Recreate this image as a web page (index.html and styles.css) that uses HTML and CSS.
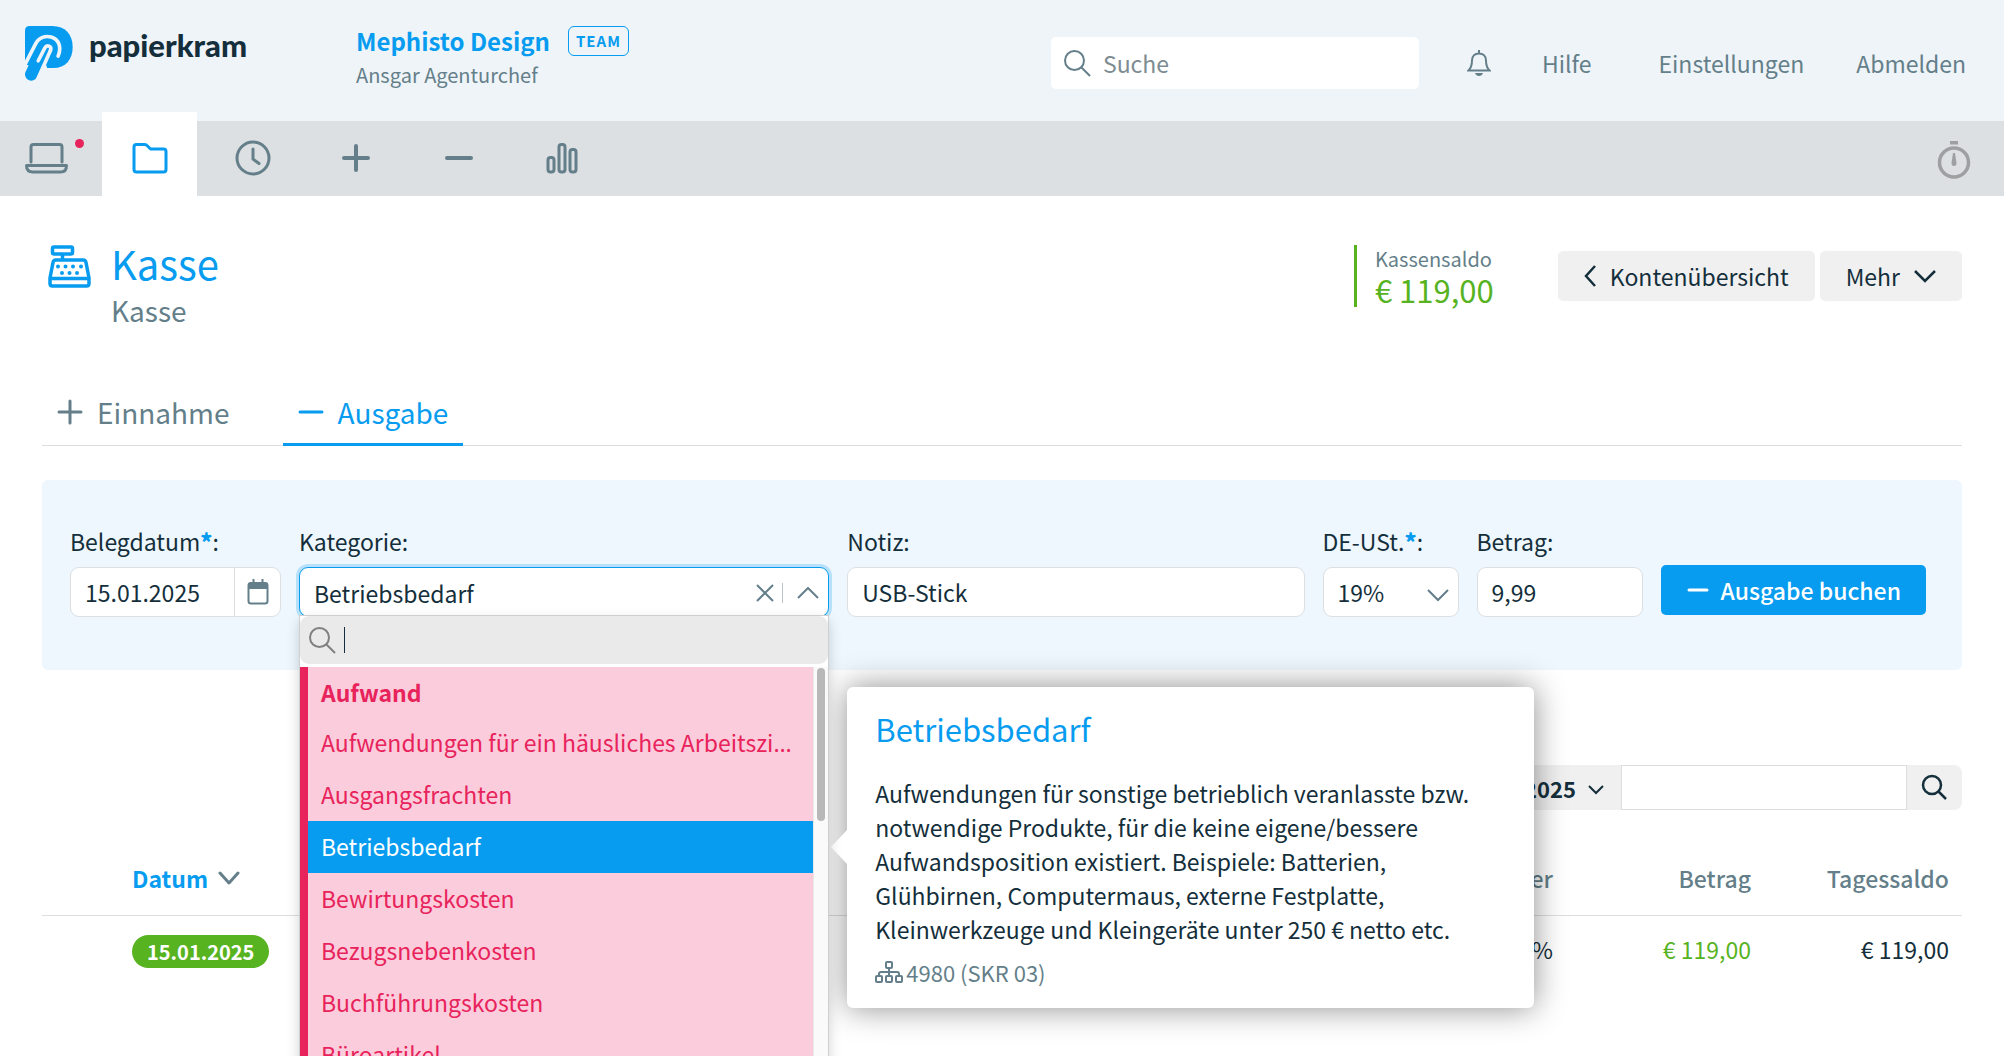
FILE: index.html
```html
<!DOCTYPE html>
<html lang="de">
<head>
<meta charset="utf-8">
<title>Kasse – papierkram</title>
<link rel="stylesheet" href="styles.css">
</head>
<body>
<header class="topbar">
  <a class="brand" href="#">
    <svg class="brand-mark" viewBox="27 30 145 166" aria-hidden="true">
      <path d="M27 44Q27 30 41 30H110C148 30 171 56 171 93S150 157 112 157H80L27 146Z" fill="#079cf0"/>
      <path d="M46 176L78 108" stroke="#079cf0" stroke-width="38" stroke-linecap="round"/>
      <path d="M20 160L59 84C68 66 86 58 106 63C130 70 138 94 127 121" fill="none" stroke="#eff4f8" stroke-width="11" stroke-linecap="round"/>
      <path d="M67 135L87 96C93 85 109 90 104 104" fill="none" stroke="#eff4f8" stroke-width="11" stroke-linecap="round"/>
      <path d="M104 103L66 190" fill="none" stroke="#eff4f8" stroke-width="11"/>
      <path d="M94 157L74 203H60L88 140Z" fill="#eff4f8"/>
    </svg>
    <span class="brand-name">papierkram</span>
  </a>
  <div class="account">
    <div class="account-line"><a class="company" href="#">Mephisto Design</a><span class="plan">TEAM</span></div>
    <div class="user">Ansgar Agenturchef</div>
  </div>
  <div class="tools">
    <label class="search">
      <svg width="28" height="28" viewBox="0 0 28 28" class="line"><circle cx="11.500" cy="11.500" r="9.500"/><path d="M18.500 18.500L27 27"/></svg>
      <input type="text" placeholder="Suche" aria-label="Suche">
    </label>
    <button class="bell" type="button" aria-label="Benachrichtigungen">
      <svg width="24" height="26" viewBox="0 0 24 26" class="line"><path d="M12 0V3M1.500 20.500C4 18 5 15 5 10.500C5 6 8 3.500 12 3.500S19 6 19 10.500C19 15 20 18 22.500 20.500Z"/><path d="M8 23H16Q15 26 12 26T8 23Z" fill="currentColor" stroke="none"/></svg>
    </button>
    <a href="#" class="link-help">Hilfe</a>
    <a href="#" class="link-settings">Einstellungen</a>
    <a href="#" class="link-logout">Abmelden</a>
  </div>
</header>

<nav class="mainnav" aria-label="Hauptnavigation">
  <a href="#" class="first" aria-label="Übersicht"><svg width="44" height="32" viewBox="0 0 44 32" class="thick"><path d="M6 20V5Q6 2.500 8.500 2.500H34.500Q37 2.500 37 5V20"/><path d="M1.500 23.500H41.500Q41.500 30 35.500 30H8Q1.500 30 1.500 23.500Z"/></svg><span class="dot"></span></a>
  <a href="#" class="active" aria-label="Geschäft"><svg width="36" height="32" viewBox="0 0 36 32" class="thick"><path d="M2 5Q2 2.500 4.500 2.500H12.500Q14.500 2.500 15.500 4L18.500 7H31.500Q34 7 34 9.500V27.500Q34 30 31.500 30H4.500Q2 30 2 27.500Z"/></svg></a>
  <a href="#" aria-label="Zeit"><svg width="36" height="36" viewBox="0 0 36 36" class="thick"><circle cx="18" cy="18" r="16"/><path d="M18 9V19L24 23.500"/></svg></a>
  <a href="#" aria-label="Einnahmen"><svg width="28" height="28" viewBox="0 0 28 28" class="heavy"><path d="M14 2V26M2 14H26"/></svg></a>
  <a href="#" aria-label="Ausgaben"><svg width="28" height="28" viewBox="0 0 28 28" class="heavy"><path d="M2 14H26"/></svg></a>
  <a href="#" aria-label="Auswertungen"><svg width="32" height="32" viewBox="0 0 32 32" class="thick"><rect x="2" y="15.500" width="6" height="14.500" rx="2.500"/><rect x="13" y="2.500" width="6" height="27.500" rx="2.500"/><rect x="24" y="7.500" width="6" height="22.500" rx="2.500"/></svg></a>
  <button class="timer" type="button" aria-label="Stoppuhr"><svg width="34" height="40" viewBox="0 0 34 40"><circle cx="17" cy="22.500" r="14.500" fill="none" stroke="currentColor" stroke-width="3.500"/><path d="M13 1H21V4.500H13Z" fill="currentColor"/><path d="M16 13H18L19.500 23Q19.500 26 17 26T14.500 23Z" fill="currentColor"/></svg></button>
</nav>

<main class="content">
  <section class="pagehead">
    <svg class="register" width="44" height="44" viewBox="0 0 44 44" fill="none" stroke="#079cf0" stroke-width="3.500" stroke-linejoin="round"><rect x="4.500" y="2" width="20" height="7" rx="1.500"/><path d="M14.500 9V15M8 15H35Q37.500 15 38 17.500L41 33V38.500Q41 41 38.500 41H4.500Q2 41 2 38.500V33L5 17.500Q5.500 15 8 15ZM2 33.500H41"/><path d="M10 21.500H10M17.500 21.500H17.500M25 21.500H25M33 21.500H33M14 28H14M21.500 28H21.500M29 28H29" stroke-width="4" stroke-linecap="round"/></svg>
    <div class="titles"><h1>Kasse</h1><p>Kasse</p></div>
    <div class="headtools">
      <div class="balance"><span class="balance-label">Kassensaldo</span><span class="balance-value">€ 119,00</span></div>
      <button class="btn" type="button"><svg width="12" height="22" viewBox="0 0 12 22" class="chevron"><path d="M11 1L2 11L11 21"/></svg>Kontenübersicht</button>
      <button class="btn btn-more" type="button">Mehr<svg width="22" height="14" viewBox="0 0 22 14" class="chevron"><path d="M1 2L11 12L21 2"/></svg></button>
    </div>
  </section>

  <nav class="tabs" aria-label="Buchungsart">
    <a href="#"><svg width="26" height="26" viewBox="0 0 26 26" class="tabicon"><path d="M13 2V24M2 13H24"/></svg>Einnahme</a>
    <a href="#" class="active"><svg width="26" height="26" viewBox="0 0 26 26" class="tabicon"><path d="M2 13H24"/></svg>Ausgabe</a>
  </nav>

  <form class="booking">
    <div class="field">
      <label for="date">Belegdatum<b>*</b>:</label>
      <div class="datebox"><input id="date" type="text" value="15.01.2025"><button type="button" aria-label="Kalender"><svg width="22" height="26" viewBox="0 0 22 26"><path d="M3.500 4H18.500Q20.500 4 20.500 6.500V22Q20.500 24.500 18 24.500H4Q1.500 24.500 1.500 22V6.500Q1.500 4 3.500 4Z" fill="none" stroke="currentColor" stroke-width="2"/><path d="M1 4H21V10H1ZM5.500 0H7.500V4H5.500ZM14.500 0H16.500V4H14.500Z" fill="currentColor"/></svg></button></div>
    </div>
    <div class="field category">
      <label for="category">Kategorie:</label>
      <button id="category" class="combo" type="button" role="combobox" aria-expanded="true" aria-controls="category-list">
        <span class="combo-value">Betriebsbedarf</span>
        <svg width="18" height="18" viewBox="0 0 18 18" class="line"><path d="M1 1L17 17M17 1L1 17"/></svg>
        <span class="combo-rule"></span>
        <svg width="22" height="12" viewBox="0 0 22 12" class="line"><path d="M1 11L11 1L21 11"/></svg>
      </button>
      <div class="dropdown">
        <label class="dropdown-search"><svg width="28" height="28" viewBox="0 0 28 28" class="line"><circle cx="11.500" cy="11.500" r="9.500"/><path d="M18.500 18.500L27 27"/></svg><span class="caret"></span><input type="text" aria-label="Kategorie suchen"></label>
        <div class="dropdown-body">
          <ul id="category-list" role="listbox">
            <li class="group">Aufwand</li>
            <li role="option">Aufwendungen für ein häusliches Arbeitszi<span class="dots">…</span></li>
            <li role="option">Ausgangsfrachten</li>
            <li role="option" aria-selected="true" class="selected">Betriebsbedarf</li>
            <li role="option">Bewirtungskosten</li>
            <li role="option">Bezugsnebenkosten</li>
            <li role="option">Buchführungskosten</li>
            <li role="option">Büroartikel</li>
          </ul>
          <div class="track"><div class="thumb"></div></div>
        </div>
      </div>
    </div>
    <div class="field note">
      <label for="note">Notiz:</label>
      <input id="note" type="text" value="USB-Stick">
      <aside class="hint" role="tooltip">
        <h2>Betriebsbedarf</h2>
        <p>Aufwendungen für sonstige betrieblich veranlasste bzw. notwendige Produkte, für die keine eigene/bessere Aufwandsposition existiert. Beispiele: Batterien, Glühbirnen, Computermaus, externe Festplatte, Kleinwerkzeuge und Kleingeräte unter 250 € netto etc.</p>
        <div class="account-no"><svg width="28" height="22" viewBox="0 0 28 22" fill="none" stroke="currentColor" stroke-width="2"><rect x="11" y="1" width="6" height="6" rx="1"/><rect x="1" y="15" width="6" height="6" rx="1"/><rect x="11" y="15" width="6" height="6" rx="1"/><rect x="21" y="15" width="6" height="6" rx="1"/><path d="M14 7V15M4 15V13Q4 11 6 11H22Q24 11 24 13V15"/></svg>4980 (SKR 03)</div>
      </aside>
    </div>
    <div class="field">
      <label for="vat">DE-USt.<b>*</b>:</label>
      <div class="selectbox"><select id="vat"><option>19%</option></select><svg width="22" height="14" viewBox="0 0 22 14" class="line"><path d="M1 2L11 12L21 2"/></svg></div>
    </div>
    <div class="field">
      <label for="amount">Betrag:</label>
      <input id="amount" type="text" value="9,99">
    </div>
    <button class="submit" type="button"><svg width="22" height="22" viewBox="0 0 22 22" class="tabicon"><path d="M2 11H20"/></svg>Ausgabe buchen</button>
  </form>

  <div class="filter">
    <button class="year" type="button">2025<svg width="16" height="10" viewBox="0 0 16 10" class="line"><path d="M1 1L8 8L15 1"/></svg></button>
    <input type="text" aria-label="Buchungen durchsuchen">
    <button class="go" type="button" aria-label="Suchen"><svg width="26" height="26" viewBox="0 0 26 26" class="chevron"><circle cx="11" cy="11" r="9"/><path d="M17.500 17.500L25 25"/></svg></button>
  </div>

  <table class="entries">
    <thead><tr><th class="date"><a href="#">Datum<svg width="22" height="14" viewBox="0 0 22 14" class="thick"><path d="M2 2L11 12L20 2"/></svg></a></th><th>Steuer</th><th>Betrag</th><th>Tagessaldo</th></tr></thead>
    <tbody><tr><td class="date"><span class="pill">15.01.2025</span></td><td>19 %</td><td class="plus">€ 119,00</td><td>€ 119,00</td></tr></tbody>
  </table>
</main>
</body>
</html>
```
FILE: styles.css
```css
:root {
  --blue: #079cf0;
  --ink: #142f3b;
  --slate: #647f8a;
  --green: #57b31f;
  --pink: #e8235b;
  --rule: #dcdfe1;
  --soft: #f0f0f0;
}

* { box-sizing: border-box; }

body {
  margin: 0;
  height: 100vh;
  overflow: hidden;
  background: #fff;
  color: var(--ink);
  font: 23px/34px "Noto Sans CJK SC", "Noto Sans", sans-serif;
}

a { color: inherit; text-decoration: none; }
button, input, select { font: inherit; color: inherit; margin: 0; }
button { border: 0; background: none; padding: 0; cursor: pointer; }
svg { flex: none; display: block; }
h1, h2, p, ul { margin: 0; padding: 0; font-weight: 400; }

.line, .thick, .heavy, .tabicon, .chevron { fill: none; stroke: currentColor; stroke-width: 2; }
.thick { stroke-width: 3; stroke-linecap: round; stroke-linejoin: round; }
.heavy { stroke-width: 4; stroke-linecap: round; }
.tabicon { stroke-width: 3; stroke-linecap: round; }
.chevron { stroke-width: 2.5; }

/* Top bar */
.topbar {
  display: flex;
  align-items: flex-start;
  height: 121px;
  padding: 23px 38px 0 25px;
  background: #eff4f8;
}
.brand { display: flex; gap: 16px; width: 331px; padding-top: 3px; }
.brand-mark { width: 48px; height: 55px; }
.brand-name { font: 900 31px/38px Lato, sans-serif; }
.account-line { display: flex; align-items: center; height: 35px; gap: 18px; }
.company { color: var(--blue); font-size: 24px; font-weight: 700; }
.plan {
  padding: 0 7px;
  border: 1px solid var(--blue);
  border-radius: 6px;
  color: var(--blue);
  font-size: 15px;
  font-weight: 700;
  line-height: 28px;
  letter-spacing: 1px;
}
.user { color: var(--slate); font-size: 20px; }
.tools { display: flex; align-items: center; height: 80px; margin-left: auto; color: var(--slate); }
.search {
  display: flex;
  align-items: center;
  gap: 12px;
  width: 368px;
  height: 52px;
  padding: 0 12px;
  border-radius: 5px;
  background: #fff;
}
.search input { flex: 1; min-width: 0; border: 0; outline: 0; background: none; padding: 0; }
.search input::placeholder { color: #7d8c93; opacity: 1; }
.bell { margin: 0 51px 0 48px; }
.link-settings { margin: 0 52px 0 67px; }

/* Icon navigation */
.mainnav { display: flex; gap: 8px; height: 75px; padding-right: 33px; background: #dce0e3; color: var(--slate); }
.mainnav a { position: relative; display: grid; place-items: center; width: 95px; padding-bottom: 2px; }
.mainnav a.first { width: 94px; }
.mainnav a.active { margin-top: -9px; padding-top: 9px; background: #fff; color: var(--blue); }
.dot { position: absolute; right: 10px; top: 18px; width: 9px; height: 9px; border-radius: 50%; background: var(--pink); }
.timer { margin-left: auto; padding-top: 2px; color: #9e9fa0; }

/* Page head */
.content { padding: 41px 42px 0; }
.pagehead { display: flex; align-items: flex-start; }
.register { margin: 8px 19px 0 6px; }
.titles h1 { color: var(--blue); font-size: 40px; line-height: 52px; }
.titles p { color: var(--slate); font-size: 28px; line-height: 42px; }
.headtools { display: flex; align-items: center; gap: 5px; height: 78px; margin-left: auto; }
.balance { display: grid; margin-right: 59px; padding-left: 18px; border-left: 3px solid var(--green); }
.balance-label { color: var(--slate); font-size: 20px; line-height: 28px; }
.balance-value { color: var(--green); font-size: 31px; }
.btn {
  display: flex;
  align-items: center;
  gap: 14px;
  height: 50px;
  padding: 0 26px;
  border-radius: 5px;
  background: var(--soft);
}

/* Tabs */
.tabs { display: flex; gap: 38px; margin-top: 45px; border-bottom: 1px solid var(--rule); color: var(--slate); }
.tabs a {
  display: flex;
  align-items: center;
  gap: 14px;
  height: 70px;
  margin-bottom: -1px;
  padding: 4px 15px 0;
  border-bottom: 3px solid transparent;
  font-size: 28px;
}
.tabs a.active { border-color: var(--blue); color: var(--blue); }

/* Booking form */
.booking {
  display: grid;
  grid-template-columns: 211px 530fr 457fr 136px 166px auto;
  gap: 18px;
  align-items: end;
  margin-top: 34px;
  padding: 41px 36px 53px 28px;
  border-radius: 6px;
  background: #eef7fe;
}
.field { position: relative; display: grid; gap: 6px; min-width: 0; }
.field > label { line-height: 40px; }
.field b { color: var(--blue); font-weight: 900; }
.field > input, .datebox, .selectbox, .combo {
  width: 100%;
  height: 50px;
  border: 1px solid var(--rule);
  border-radius: 9px;
  background: #fff;
}
.field > input { padding: 0 14px 1px; }
.datebox { display: flex; overflow: hidden; }
.datebox input { flex: 1; min-width: 0; border: 0; padding: 0 14px 1px; background: none; }
.datebox button { display: grid; place-items: center; width: 46px; border-left: 1px solid var(--rule); color: var(--slate); }
.selectbox { position: relative; }
.selectbox select { appearance: none; width: 100%; height: 48px; padding: 0 14px; border: 0; background: none; }
.selectbox svg { position: absolute; right: 9px; top: 20px; color: var(--slate); pointer-events: none; }
.combo {
  display: flex;
  align-items: center;
  gap: 8px;
  padding: 1px 9px 0 14px;
  border-color: var(--blue);
  box-shadow: 0 0 0 3px #b7e1fa;
  text-align: left;
}
.combo-value { flex: 1; }
.combo svg { color: var(--slate); }
.combo-rule { width: 1px; height: 20px; margin-right: 6px; background: #b9c3c8; }
.submit {
  display: flex;
  align-items: center;
  gap: 12px;
  height: 50px;
  margin-bottom: 2px;
  padding: 0 25px 1px 26px;
  border-radius: 5px;
  background: var(--blue);
  color: #fff;
  font-weight: 500;
}

/* Category drop-down */
.dropdown {
  position: absolute;
  z-index: 2;
  top: 94px;
  left: 0;
  right: 0;
  border: 1px solid #ccd0d2;
  background: #fff;
  box-shadow: 0 6px 12px rgba(0, 0, 0, .18);
}
.dropdown-search {
  display: flex;
  align-items: center;
  height: 48px;
  padding: 0 8px;
  border-radius: 9px;
  background: #eaeaea;
  color: #808080;
}
.dropdown-search input { flex: 1; min-width: 0; border: 0; background: none; outline: 0; }
.caret { width: 1px; height: 26px; margin-left: 8px; background: var(--ink); }
.dropdown-body { display: flex; margin-top: 3px; }
.dropdown ul { flex: 1; min-width: 0; list-style: none; border-left: 8px solid var(--pink); background: #fbccdb; color: var(--pink); }
.dropdown li { padding: 0 13px 2px; overflow: hidden; white-space: nowrap; line-height: 50px; }
.dropdown .group { padding-bottom: 0; font-weight: 700; }
.dropdown .selected { background: var(--blue); color: #fff; }
.dots { font-family: "Noto Sans", sans-serif; line-height: 1; }
.track { width: 15px; padding: 1px 3px; border-left: 1px solid #e8e8e8; background: #fafafa; }
.thumb { height: 153px; border-radius: 4px; background: #b8b8b8; }

/* Category hint */
.hint {
  position: absolute;
  z-index: 1;
  top: 166px;
  left: 0;
  width: 687px;
  padding: 22px 28px 19px;
  border-radius: 6px;
  background: #fff;
  box-shadow: 0 0 32px rgba(0, 0, 0, .45);
}
.hint::before {
  content: "";
  position: absolute;
  left: -16px;
  top: 143px;
  border: 17px solid transparent;
  border-left: 0;
  border-right: 16px solid #fff;
}
.hint h2 { color: var(--blue); font-size: 31px; line-height: 40px; }
.hint p { margin-top: 27px; }
.account-no { display: flex; align-items: center; gap: 3px; margin-top: 9px; color: var(--slate); font-size: 22px; }

/* Filter */
.filter { display: flex; justify-content: flex-end; height: 45px; margin-top: 95px; }
.year { display: flex; align-items: center; gap: 12px; padding: 0 17px 0 25px; border-radius: 8px 0 0 8px; background: var(--soft); font-weight: 700; font-size: 22px; line-height: 42px; }
.year svg { margin-top: 4px; }
.filter input { width: 286px; border: 1px solid var(--rule); background: #fff; }
.go { display: grid; place-items: center; width: 55px; padding: 0 2px 1px 0; border-radius: 0 8px 8px 0; background: var(--soft); }

/* Entries */
.entries { width: 100%; margin-top: 32px; border-collapse: collapse; table-layout: fixed; }
.entries th, .entries td { width: 198px; height: 73px; padding: 0 13px; text-align: right; }
.entries td { height: 68px; }
.entries th { border-bottom: 1px solid var(--rule); color: var(--slate); font-weight: 500; }
.entries .date { width: auto; padding-left: 90px; text-align: left; }
.entries .date a { display: flex; align-items: center; gap: 10px; color: var(--blue); font-weight: 700; }
.entries .date svg { color: var(--slate); }
.plus { color: var(--green); }
.pill { display: inline-block; padding: 0 15px; border-radius: 17px; background: var(--green); color: #fff; font-size: 20px; font-weight: 700; line-height: 33px; vertical-align: middle; }
```
